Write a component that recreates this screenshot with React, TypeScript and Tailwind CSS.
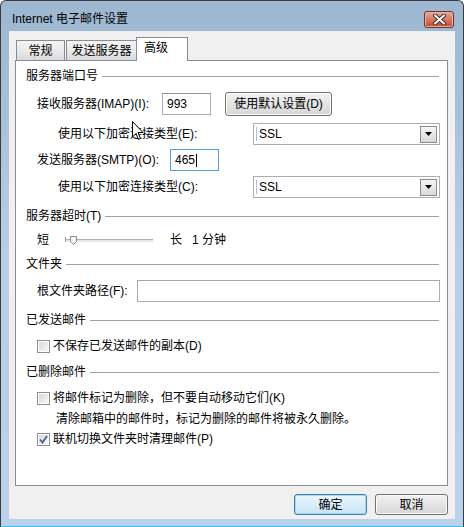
import React from 'react';

function SectionHeader({ title, className }: { title: string; className: string }) {
  return (
    <div className={`flex items-center h-4 ${className}`}>
      <span className="whitespace-nowrap">{title}</span>
      <div className="ml-[4px] mr-[1px] flex-1 h-px bg-[#a0a0a0]" />
    </div>
  );
}

function SelectBox() {
  return (
    <div className="w-[187px] h-[22px] border border-[#abadb3] bg-white flex items-center pl-[2px] pr-[2px]">
      <div className="w-px h-[14px] bg-[#9cc1ea]" />
      <span className="ml-[2px] flex-1">SSL</span>
      <div className="w-[17px] h-[17px] border border-[#8a8a8a] bg-gradient-to-b from-[#f5f5f5] to-[#d9d9d9] flex items-center justify-center">
        <svg width="7" height="4" viewBox="0 0 7 4">
          <path d="M0 0h7L3.5 4z" fill="#000" />
        </svg>
      </div>
    </div>
  );
}

function CheckBox({ checked }: { checked?: boolean }) {
  return (
    <div className="w-[13px] h-[13px] border border-[#8e8f8f] bg-white p-px shrink-0">
      <div className="w-full h-full bg-gradient-to-br from-[#d8d8d8] to-[#f8f8f8] flex items-center justify-center">
        {checked && (
          <svg width="9" height="9" viewBox="0 0 9 9">
            <path d="M1 4.5 L3.5 7.5 L8 1" stroke="#4a5f97" strokeWidth="1.8" fill="none" />
          </svg>
        )}
      </div>
    </div>
  );
}

function CheckRow({ label, checked, className }: { label: string; checked?: boolean; className: string }) {
  return (
    <div className={`flex items-center h-4 pl-[11px] ${className}`}>
      <CheckBox checked={checked} />
      <span className="ml-[3px] whitespace-nowrap">{label}</span>
    </div>
  );
}

function WinButton({ label, focused, className }: { label: string; focused?: boolean; className?: string }) {
  return (
    <div
      className={`h-[21px] w-[73px] rounded-[3px] border flex items-center justify-center ${
        focused
          ? 'border-[#3c7fb1] bg-gradient-to-b from-[#eaf6fd] to-[#c9e4f5] shadow-[inset_0_0_0_1px_#a8d8f5]'
          : 'border-[#707070] bg-gradient-to-b from-[#f2f2f2] to-[#d6d6d6] shadow-[inset_0_0_0_1px_#fcfcfc]'
      } ${className ?? ''}`}
    >
      {label}
    </div>
  );
}

export default function App() {
  return (
    <div className="relative w-[464px] h-[527px] font-['Liberation_Sans','Noto_Sans_CJK_SC',sans-serif] text-[12px] leading-4 text-black bg-white">
      <div className="w-[464px] h-[527px] flex flex-col border border-[#3b3b3b] border-b-[#2fc6e6] rounded-t-[6px] bg-gradient-to-b from-[#9db7d1] via-[#b7cee6] to-[#b9d1ea] px-[8px]">
        {/* title bar */}
        <div className="h-[30px] shrink-0 flex items-center justify-between pl-[3px] pr-[1px] pt-[6px]">
          <span className="text-[12px]">Internet 电子邮件设置</span>
          <div className="w-[30px] h-[17px] rounded-[3px] border border-[#6b332a] bg-gradient-to-b from-[#e9a898] via-[#d27a66] to-[#c2432c] flex items-center justify-center shadow-[inset_0_0_0_1px_#eab2a4]">
            <svg width="13" height="11" viewBox="0 0 13 11">
              <path d="M2 1.5 L11 9.5 M11 1.5 L2 9.5" stroke="#4a2a25" strokeWidth="4" strokeLinecap="round" />
              <path d="M2 1.5 L11 9.5 M11 1.5 L2 9.5" stroke="#fff" strokeWidth="2" strokeLinecap="round" />
            </svg>
          </div>
        </div>

        {/* client area */}
        <div className="h-[488px] shrink-0 bg-[#f0f0f0] pt-[6px] pl-[6px] pr-[7px] flex flex-col">
          {/* tabs */}
          <div className="h-[23px] flex items-end">
            <div className="ml-[1px] w-[49px] h-[20px] border border-b-0 border-[#898c95] bg-gradient-to-b from-[#f3f3f3] via-[#ebebeb] to-[#d9d9d9] flex items-center justify-center">
              常规
            </div>
            <div className="ml-[1px] w-[71px] h-[20px] border border-b-0 border-[#898c95] bg-gradient-to-b from-[#f3f3f3] via-[#ebebeb] to-[#d9d9d9] flex items-center justify-center">
              发送服务器
            </div>
            <div className="relative z-10 -ml-[1px] -mb-px w-[52px] h-[24px] border border-b-0 border-[#898c95] bg-white flex items-start justify-start pl-[7px] pt-[2px]">
              高级
            </div>
          </div>

          {/* tab panel */}
          <div className="h-[426px] w-[433px] border border-[#898c95] bg-white flex flex-col pl-[10px] pr-[7px]">
            <SectionHeader title="服务器端口号" className="mt-[7px]" />

            <div className="mt-[8px] h-[24px] flex items-center pl-[11px]">
              <span className="w-[125px] shrink-0 whitespace-nowrap">接收服务器(IMAP)(I):</span>
              <div className="w-[49px] h-[22px] border border-[#abadb3] border-t-[#8f96a2] bg-white flex items-center pl-[4px]">993</div>
              <WinButton label="使用默认设置(D)" className="ml-[14px] w-[107px] h-[24px]" />
            </div>

            <div className="mt-[7px] h-[22px] flex items-center pl-[32px]">
              <span className="flex-1 whitespace-nowrap">使用以下加密连接类型(E):</span>
              <SelectBox />
            </div>

            <div className="mt-[4px] h-[22px] flex items-center pl-[11px]">
              <span className="w-[133px] shrink-0 whitespace-nowrap">发送服务器(SMTP)(O):</span>
              <div className="w-[49px] h-[22px] border border-[#569de5] bg-white flex items-center pl-[4px]">
                465<span className="ml-px w-px h-[13px] bg-black" />
              </div>
            </div>

            <div className="mt-[5px] h-[22px] flex items-center pl-[32px]">
              <span className="flex-1 whitespace-nowrap">使用以下加密连接类型(C):</span>
              <SelectBox />
            </div>

            <SectionHeader title="服务器超时(T)" className="mt-[10px]" />

            <div className="mt-[8px] h-4 flex items-center pl-[11px]">
              <span>短</span>
              <div className="relative ml-[16px] w-[88px] h-[3px] border-t border-[#b0b0b0] bg-[#e7e7e7]">
                <div className="absolute left-0 -top-[3px] w-px h-[5px] bg-[#a0a0a0]" />
                <svg className="absolute left-[5px] -top-[4px]" width="7" height="9" viewBox="0 0 7 9">
                  <path d="M0.5 0.5h6v5l-3 3l-3-3z" fill="#f4f4f4" stroke="#8a8a8a" />
                </svg>
              </div>
              <span className="ml-[17px]">长</span>
              <span className="ml-[10px]">1 分钟</span>
            </div>

            <SectionHeader title="文件夹" className="mt-[8px]" />

            <div className="mt-[8px] h-[22px] flex items-center pl-[11px]">
              <span className="w-[100px] shrink-0 whitespace-nowrap">根文件夹路径(F):</span>
              <div className="flex-1 h-[22px] border border-[#abadb3] border-t-[#a3a7b0] bg-white" />
            </div>

            <SectionHeader title="已发送邮件" className="mt-[10px]" />
            <CheckRow label="不保存已发送邮件的副本(D)" className="mt-[10px]" />

            <SectionHeader title="已删除邮件" className="mt-[10px]" />
            <CheckRow label="将邮件标记为删除，但不要自动移动它们(K)" className="mt-[10px]" />
            <div className="mt-[5px] h-4 flex items-center pl-[30px] whitespace-nowrap">
              清除邮箱中的邮件时，标记为删除的邮件将被永久删除。
            </div>
            <CheckRow label="联机切换文件夹时清理邮件(P)" checked className="mt-[4px]" />
          </div>

          {/* footer buttons */}
          <div className="mt-[8px] flex justify-end gap-[8px] pr-[-1px]">
            <WinButton label="确定" focused />
            <WinButton label="取消" />
          </div>
        </div>
      </div>

      {/* mouse cursor */}
      <svg className="absolute left-[132px] top-[121px]" width="12" height="20" viewBox="0 0 12 20">
        <path d="M0.5 0.5 V16 L4 12.5 L6.5 18.5 L8.5 17.5 L6 11.5 H11 Z" fill="#fff" stroke="#000" strokeWidth="1" />
      </svg>
    </div>
  );
}
